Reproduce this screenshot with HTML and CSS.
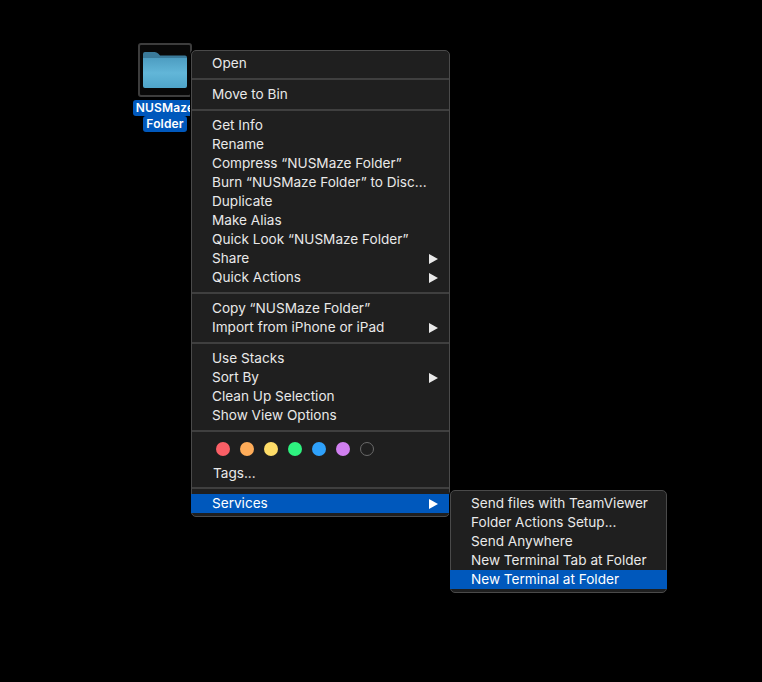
FILE: index.html
```html
<!DOCTYPE html>
<html>
<head lang="en">
	<meta charset="UTF-8">
	<title>Finder context menu</title>
	<link rel="stylesheet" href="styles.css">
</head>
<body>

<div class="desktop">

	<div class="folder-item">
		<div class="folder-thumb">
			<svg class="folder-icon" width="44" height="36" viewBox="0 0 45 36" preserveAspectRatio="none">
				<defs>
					<linearGradient id="folderFront" x1="0" y1="0" x2="0" y2="1">
						<stop offset="0" stop-color="#4d9dc2"/>
						<stop offset="0.5" stop-color="#62b6d8"/>
						<stop offset="1" stop-color="#4fa5ca"/>
					</linearGradient>
				</defs>
				<path d="M0 2 Q0 0 2 0 H12 Q14 0 15.500 1.500 L17.500 3.500 H43 Q45 3.500 45 5.500 V12 H0 Z" fill="#3a7a9a"/>
				<path d="M0 6 H45 V34 Q45 36 43 36 H2 Q0 36 0 34 Z" fill="url(#folderFront)"/>
			</svg>
		</div>
		<div class="folder-label">
			<span class="folder-line">NUSMaze</span>
			<span class="folder-line">Folder</span>
		</div>
	</div>

	<div class="menu main-menu">
		<div class="menu-row">Open</div>
		<div class="menu-sep"></div>
		<div class="menu-row">Move to Bin</div>
		<div class="menu-sep"></div>
		<div class="menu-row">Get Info</div>
		<div class="menu-row">Rename</div>
		<div class="menu-row">Compress “NUSMaze Folder”</div>
		<div class="menu-row">Burn “NUSMaze Folder” to Disc...</div>
		<div class="menu-row">Duplicate</div>
		<div class="menu-row">Make Alias</div>
		<div class="menu-row">Quick Look “NUSMaze Folder”</div>
		<div class="menu-row has-sub">Share<i class="arrow"></i></div>
		<div class="menu-row has-sub">Quick Actions<i class="arrow"></i></div>
		<div class="menu-sep"></div>
		<div class="menu-row">Copy “NUSMaze Folder”</div>
		<div class="menu-row has-sub">Import from iPhone or iPad<i class="arrow"></i></div>
		<div class="menu-sep"></div>
		<div class="menu-row">Use Stacks</div>
		<div class="menu-row has-sub">Sort By<i class="arrow"></i></div>
		<div class="menu-row">Clean Up Selection</div>
		<div class="menu-row">Show View Options</div>
		<div class="menu-sep"></div>
		<div class="tags-block">
			<div class="tag-dots">
				<span class="dot dot-red"></span>
				<span class="dot dot-orange"></span>
				<span class="dot dot-yellow"></span>
				<span class="dot dot-green"></span>
				<span class="dot dot-blue"></span>
				<span class="dot dot-purple"></span>
				<span class="dot dot-none"></span>
			</div>
			<div class="tags-text">Tags...</div>
		</div>
		<div class="menu-sep"></div>
		<div class="menu-row has-sub selected">Services<i class="arrow"></i></div>
	</div>

	<div class="menu sub-menu">
		<div class="menu-row">Send files with TeamViewer</div>
		<div class="menu-row">Folder Actions Setup...</div>
		<div class="menu-row">Send Anywhere</div>
		<div class="menu-row">New Terminal Tab at Folder</div>
		<div class="menu-row selected">New Terminal at Folder</div>
	</div>

</div>

</body>
</html>
```

FILE: styles.css
```css
* {
	margin: 0;
	padding: 0;
	box-sizing: border-box;
	font-family: "Inter", "Liberation Sans", Arial, sans-serif;
}
html, body {
	height: 100%;
	background: #000000;
}
.desktop {
	position: relative;
	width: 762px;
	height: 682px;
	overflow: hidden;
	background: #000000;
}

/* folder on the desktop */
.folder-item {
	position: absolute;
	left: 125px;
	top: 43px;
	width: 80px;
	display: flex;
	flex-direction: column;
	align-items: center;
}
.folder-thumb {
	width: 54px;
	height: 54px;
	border: 2px solid #3d3d3d;
	border-radius: 3px;
	background: #080808;
	display: flex;
	align-items: center;
	justify-content: center;
}
.folder-label {
	margin-top: 3px;
	display: flex;
	flex-direction: column;
	align-items: center;
}
.folder-line {
	background: #0058bc;
	color: #ffffff;
	font-size: 12px;
	font-weight: 600;
	letter-spacing: 0.15px;
	line-height: 16px;
	padding: 0 3px;
	border-radius: 3px;
}

/* menus */
.menu {
	position: absolute;
	padding: 4px 0;
	background: #1f1f1f;
	border: 1px solid #4a4a4a;
	border-radius: 5px;
	box-shadow: 0 0 0 1px #000000;
	color: #e9e9e9;
	font-size: 13.6px;
}
.main-menu {
	left: 191px;
	top: 50px;
	width: 259px;
	height: 467px;
	padding-top: 3px;
}
.sub-menu {
	left: 450px;
	top: 490px;
	width: 217px;
	height: 103px;
	padding-top: 3px;
}
.menu-row {
	height: 19px;
	line-height: 19px;
	padding-left: 20px;
	white-space: nowrap;
}
.has-sub {
	display: flex;
	align-items: center;
	justify-content: space-between;
	padding-right: 11px;
}
.selected {
	margin: 0 -1px;
	padding-left: 21px;
	background: #0058bc;
	color: #ffffff;
}
.selected.has-sub {
	padding-right: 12px;
}
.arrow {
	width: 0;
	height: 0;
	border-left: 9px solid #e9e9e9;
	border-top: 5px solid transparent;
	border-bottom: 5px solid transparent;
}
.selected .arrow {
	border-left-color: #ffffff;
}
.menu-sep {
	height: 12px;
	display: flex;
	align-items: center;
}
.menu-sep:before {
	content: "";
	display: block;
	width: 100%;
	height: 2px;
	background: #3f3f3f;
}

/* finder tags */
.tags-block {
	height: 45px;
	padding-left: 24px;
}
.tag-dots {
	display: flex;
	gap: 10px;
	padding-top: 5px;
}
.dot {
	width: 14px;
	height: 14px;
	border-radius: 50%;
}
.dot-red { background: #fb5f66; }
.dot-orange { background: #feac59; }
.dot-yellow { background: #fedc68; }
.dot-green { background: #2ef27f; }
.dot-blue { background: #2ea1fb; }
.dot-purple { background: #d07ff0; }
.dot-none {
	border: 1px solid #6a6a6a;
}
.tags-text {
	margin: 8px 0 0 -3px;
	line-height: 19px;
}
```
